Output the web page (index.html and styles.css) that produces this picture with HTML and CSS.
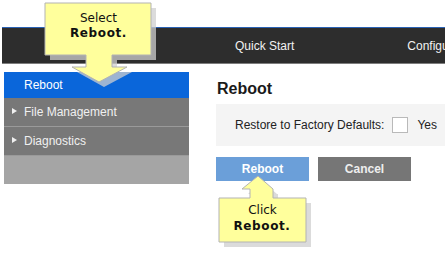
FILE: index.html
```html
<!DOCTYPE html>
<html>
<head>
<meta charset="utf-8">
<link rel="stylesheet" href="styles.css">
</head>
<body>
<div class="page">
  <header class="topbar">
    <nav class="nav">
      <span class="nav-item">Quick Start</span>
      <span class="nav-item nav-config">Configuration</span>
    </nav>
  </header>
  <div class="content">
    <aside class="sidebar">
      <div class="side-item active">Reboot</div>
      <div class="side-item group"><span class="tri"></span>File Management</div>
      <div class="side-item group"><span class="tri"></span>Diagnostics</div>
      <div class="side-fill"></div>
    </aside>
    <main class="main">
      <h1 class="title">Reboot</h1>
      <div class="panel">
        <span class="label">Restore to Factory Defaults:</span>
        <span class="checkbox"></span>
        <span class="yes">Yes</span>
      </div>
      <div class="buttons">
        <button class="btn btn-primary">Reboot</button>
        <button class="btn btn-secondary">Cancel</button>
      </div>
    </main>
  </div>
  <svg class="callouts" width="445" height="254" viewBox="0 0 445 254">
    <g class="shadow" transform="translate(5,5)">
      <polygon points="45,3 151,3 151,55 112,55 112,67 127,67 99,82 72,67 86,67 86,55 45,55"/>
      <polygon points="219,198 306,198 306,242 219,242 219,198 250,198 250,189 243,189 257,176 272,189 273,189 273,198"/>
    </g>
    <g class="bubble">
      <polygon points="45,3 151,3 151,55 112,55 112,67 127,67 99,82 72,67 86,67 86,55 45,55"/>
      <polygon points="219,198 250,198 250,189 242,189 258,176 273,189 273,189 273,198 306,198 306,242 219,242"/>
    </g>
    <text class="ct" x="98.5" y="22">Select</text>
    <text class="ct ctb" x="98.5" y="37">Reboot.</text>
    <text class="ct" x="262.5" y="213.5">Click</text>
    <text class="ct ctb" x="262" y="229.5">Reboot.</text>
  </svg>
</div>
</body>
</html>
```
FILE: styles.css
```css
html, body {
  margin: 0;
  padding: 0;
  background: #ffffff;
}
.page {
  position: relative;
  width: 445px;
  height: 254px;
  overflow: hidden;
  font-family: "Liberation Sans", Arial, sans-serif;
}
.topbar {
  margin: 27px 0 0 2px;
  height: 35px;
  border-top: 1px solid #2a62b5;
  border-bottom: 1px solid #7d7d7d;
  background: #2d2d2d;
  overflow: hidden;
}
.nav {
  display: flex;
  align-items: center;
  height: 35px;
  padding-left: 233px;
  white-space: nowrap;
}
.nav-item {
  color: #f2f2f2;
  font-size: 12px;
}
.nav-config {
  margin-left: 113px;
}
.content {
  display: flex;
  margin-top: 8px;
}
.sidebar {
  margin-left: 4px;
  width: 185px;
  display: flex;
  flex-direction: column;
}
.side-item {
  display: flex;
  align-items: center;
  padding-left: 20px;
  font-size: 12px;
  color: #ffffff;
}
.side-item.active {
  height: 26px;
  background: #0a66da;
}
.side-item.group {
  height: 28px;
  background: #787878;
  color: #f0f0f0;
  border-bottom: 1px solid #9a9a9a;
  padding-left: 8px;
}
.tri {
  width: 0;
  height: 0;
  border-left: 5px solid #f0f0f0;
  border-top: 3.5px solid transparent;
  border-bottom: 3.5px solid transparent;
  margin-right: 7px;
  margin-top: -3px;
}
.side-fill {
  height: 28px;
  background: #a5a5a5;
}
.main {
  margin-left: 27px;
  flex: 1;
  display: flex;
  flex-direction: column;
}
.title {
  margin: 7px 0 0 1px;
  font-size: 16px;
  line-height: 20px;
  font-weight: bold;
  color: #1a1a1a;
}
.panel {
  margin-top: 5px;
  height: 42px;
  background: #f4f4f4;
  display: flex;
  align-items: center;
  padding-left: 19px;
  white-space: nowrap;
  font-size: 12px;
  color: #222;
}
.checkbox {
  width: 14px;
  height: 14px;
  border: 1px solid #b9b9b9;
  background: #fff;
  margin-left: 8px;
  margin-right: 9px;
}
.buttons {
  display: flex;
  gap: 9px;
  margin-top: 11px;
}
.btn {
  width: 93px;
  height: 24px;
  border: none;
  padding: 0;
  font-family: "Liberation Sans", Arial, sans-serif;
  font-size: 12px;
  font-weight: bold;
  color: #ffffff;
}
.btn-primary {
  background: #6b9fd9;
}
.btn-secondary {
  background: #767676;
  color: #eeeeee;
}
.callouts {
  position: absolute;
  left: 0;
  top: 0;
  pointer-events: none;
}
.shadow polygon {
  fill: #cfcfcf;
  opacity: 0.75;
}
.bubble polygon {
  fill: #ffff9c;
  stroke: #b3b3b3;
  stroke-width: 1;
}
.ct {
  font-family: "DejaVu Sans", Verdana, sans-serif;
  font-size: 12px;
  text-anchor: middle;
  fill: #111;
}
.ctb {
  font-weight: bold;
  letter-spacing: 0.6px;
}
```
